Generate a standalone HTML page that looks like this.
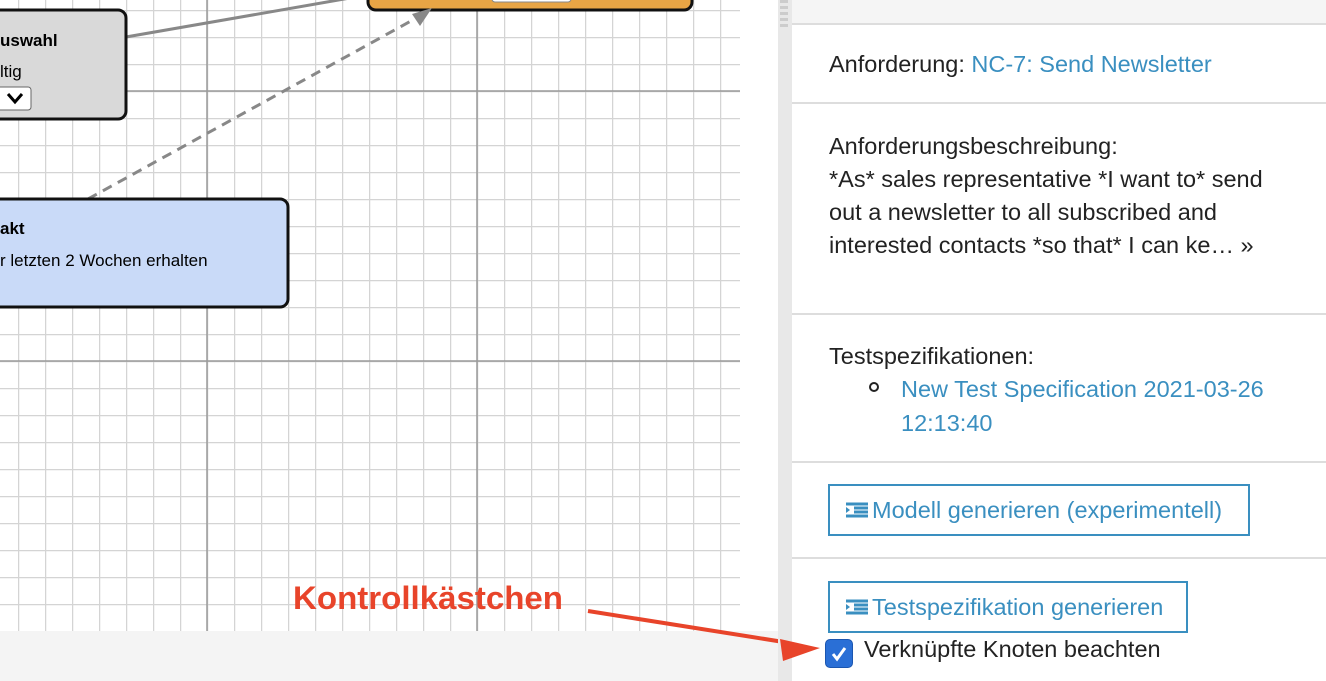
<!DOCTYPE html>
<html><head><meta charset="utf-8"><style>
body{margin:0;width:1326px;height:681px;overflow:hidden;background:#fff;position:relative;font-family:"Liberation Sans",sans-serif}
.p{position:absolute;left:792px;right:0;font-size:23.5px;color:#222}
.hr{position:absolute;left:792px;right:0;height:2px;background:#ddd}
a{color:#3a8fc0;text-decoration:none}
.btn{position:absolute;left:828px;border:2px solid #3a8fc0;color:#3a8fc0;font-size:23.5px;height:52px;box-sizing:border-box;padding:0 14px 0 16px;line-height:48px;white-space:nowrap}
.ic{display:inline-block;width:22px;height:16px;vertical-align:0px;margin-right:4px}
</style></head><body>
<svg width="780" height="681" style="position:absolute;left:0;top:0">
<defs>
<pattern id="g" x="18" y="10" width="27" height="27" patternUnits="userSpaceOnUse">
<path d="M0 0V27M0 0H27" stroke="#d4d4d4" stroke-width="2.5" fill="none"/></pattern>
</defs>
<rect x="0" y="0" width="740" height="631" fill="url(#g)"/>
<path d="M207 0V631M477 0V631M0 91H740M0 361H740" stroke="#9a9a9a" stroke-width="1.5"/>
<rect x="0" y="631" width="780" height="50" fill="#f4f4f4"/>
<rect x="368" y="-30" width="324" height="40" rx="8" fill="#e8a545" stroke="#111" stroke-width="3"/>
<rect x="492" y="-20" width="79" height="22" rx="3" fill="#fff" stroke="#888"/>
<path d="M126 37L350 -2" stroke="#888" stroke-width="3"/>
<path d="M88 199L420 16" stroke="#888" stroke-width="3" stroke-dasharray="10,7"/>
<path d="M432 8L412 14L420 26Z" fill="#888"/>
<rect x="-20" y="10" width="146" height="109" rx="8" fill="#d9d9d9" stroke="#111" stroke-width="3"/>
<text x="0" y="46" font-size="17" font-weight="bold" font-family="Liberation Sans">uswahl</text>
<text x="0" y="77" font-size="17" font-family="Liberation Sans">ltig</text>
<rect x="-10" y="87" width="41" height="23" rx="3" fill="#fff" stroke="#666"/>
<path d="M8 94L15 102L22 94" stroke="#000" stroke-width="3" fill="none"/>
<rect x="-20" y="199" width="308" height="108" rx="8" fill="#c9daf8" stroke="#111" stroke-width="3"/>
<text x="0" y="234" font-size="17" font-weight="bold" font-family="Liberation Sans">akt</text>
<text x="0" y="266" font-size="17" font-family="Liberation Sans">r letzten 2 Wochen erhalten</text>
<text x="293" y="609" font-size="32" font-weight="bold" fill="#e8442a" font-family="Liberation Sans" textLength="270" lengthAdjust="spacingAndGlyphs">Kontrollkästchen</text>
<path d="M588 611L790 643" stroke="#e8442a" stroke-width="4"/>
</svg>
<div style="position:absolute;left:778px;top:0;width:14px;height:681px;background:#e8e8e8"></div>
<div style="position:absolute;left:780px;top:0;width:8px;height:30px;background:repeating-linear-gradient(#ccc 0 3px,transparent 3px 6px)"></div>
<svg width="50" height="40" style="position:absolute;left:780px;top:625px"><path d="M0 14L40 23L3 36Z" fill="#e8442a"/></svg>
<div style="position:absolute;left:792px;top:0;right:0;height:24px;background:#f5f5f5"></div>
<div class="hr" style="top:23px"></div>
<div class="p" style="top:51px;left:829px">Anforderung: <a>NC-7: Send Newsletter</a></div>
<div class="hr" style="top:102px"></div>
<div class="p" style="top:130px;left:829px;line-height:33px;width:470px">Anforderungsbeschreibung:<br>*As* sales representative *I want to* send out a newsletter to all subscribed and interested contacts *so that* I can ke… »</div>
<div class="hr" style="top:313px"></div>
<div class="p" style="top:339px;left:829px;line-height:34px">Testspezifikationen:</div>
<div style="position:absolute;left:869px;top:382px;width:6px;height:6px;border:2px solid #222;border-radius:50%"></div>
<div class="p" style="top:372px;left:901px;line-height:34px;width:400px"><a>New Test Specification 2021-03-26 12:13:40</a></div>
<div class="hr" style="top:461px"></div>
<div class="btn" style="top:484px;width:422px"><svg class="ic" viewBox="0 0 22 16"><path d="M0 2H22M8 6H22M8 10H22M0 14H22" stroke="#3a8fc0" stroke-width="3"/><path d="M0 5L4 8L0 11Z" fill="#3a8fc0"/></svg>Modell generieren (experimentell)</div>
<div class="hr" style="top:557px"></div>
<div class="btn" style="top:581px;width:360px"><svg class="ic" viewBox="0 0 22 16"><path d="M0 2H22M8 6H22M8 10H22M0 14H22" stroke="#3a8fc0" stroke-width="3"/><path d="M0 5L4 8L0 11Z" fill="#3a8fc0"/></svg>Testspezifikation generieren</div>
<div style="position:absolute;left:825px;top:639px;width:28px;height:29px;background:#2a6fd6;border-radius:5px;border:1px solid #1b56b0;box-sizing:border-box"><svg width="26" height="27"><path d="M7 14L11 19L19 8" stroke="#fff" stroke-width="3" fill="none"/></svg></div>
<div class="p" style="top:636px;left:864px">Verknüpfte Knoten beachten</div>
</body></html>
